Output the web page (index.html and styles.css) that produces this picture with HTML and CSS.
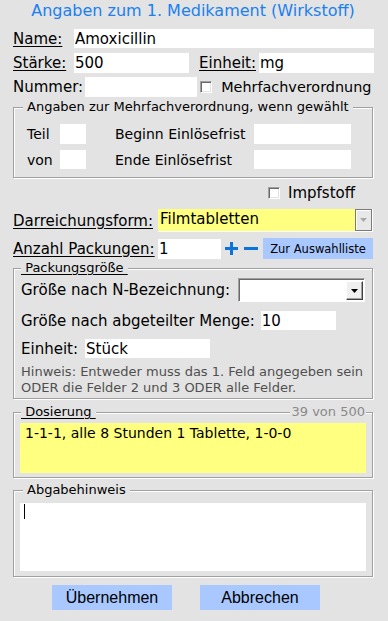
FILE: index.html
```html
<!DOCTYPE html>
<html lang="de">
<head>
  <meta charset="UTF-8" />
  <title>Angaben zum Medikament</title>
  <link rel="stylesheet" href="styles.css">
</head>
<body>
  <div class="dialog">
    <h1 class="title">Angaben zum 1. Medikament (Wirkstoff)</h1>

    <div class="row row-name">
      <span class="lbl ul w61">Name:</span>
      <input class="field w300" type="text" value="Amoxicillin" />
    </div>

    <div class="row row-strength">
      <span class="lbl ul w61">Stärke:</span>
      <input class="field w115" type="text" value="500" />
      <span class="lbl ul lbl-unit">Einheit:</span>
      <input class="field w115" type="text" value="mg" />
    </div>

    <div class="row row-number">
      <span class="lbl">Nummer:</span>
      <input class="field number-field" type="text" value="" />
      <span class="check check-multi"></span>
      <span class="lbl check-label">Mehrfachverordnung</span>
    </div>

    <!-- Mehrfachverordnung -->
    <div class="group group-multi">
      <div class="legend">Angaben zur Mehrfachverordnung, wenn gewählt</div>
      <div class="multi-grid">
        <span>Teil</span>
        <input class="field" type="text" value="" />
        <span></span>
        <span>Beginn Einlösefrist</span>
        <input class="field" type="text" value="" />
        <span>von</span>
        <input class="field" type="text" value="" />
        <span></span>
        <span>Ende Einlösefrist</span>
        <input class="field" type="text" value="" />
      </div>
    </div>

    <div class="row row-vaccine">
      <span class="check"></span>
      <span class="lbl check-label">Impfstoff</span>
    </div>

    <div class="row row-form">
      <span class="lbl ul w145">Darreichungsform:</span>
      <div class="select select-yellow">
        <span class="select-text">Filmtabletten</span>
        <span class="select-btn disabled">
          <svg width="7" height="4" viewBox="0 0 7 4"><path d="M0 0h7L3.5 4z" fill="#a8a8a8"/></svg>
        </span>
      </div>
    </div>

    <div class="row row-count">
      <span class="lbl ul w145">Anzahl Packungen:</span>
      <input class="field count-field" type="text" value="1" />
      <svg class="icon-plus" width="13" height="13" viewBox="0 0 13 13">
        <path d="M6.5 0v13M0 6.5h13" stroke="#0a74dc" stroke-width="3"/>
      </svg>
      <svg class="icon-minus" width="14" height="13" viewBox="0 0 14 13">
        <path d="M0 6.5h14" stroke="#0a74dc" stroke-width="3"/>
      </svg>
      <button class="btn-small">Zur Auswahlliste</button>
    </div>

    <!-- Packungsgröße -->
    <div class="group group-pack">
      <div class="legend legend-ul">&nbsp;Packungsgröße&nbsp;</div>
      <div class="row row-nsize">
        <span class="lbl">Größe nach N-Bezeichnung:</span>
        <div class="select select-white">
          <span class="select-text"></span>
          <span class="select-btn">
            <svg width="7" height="4" viewBox="0 0 7 4"><path d="M0 0h7L3.5 4z" fill="#000"/></svg>
          </span>
        </div>
      </div>
      <div class="row row-amount">
        <span class="lbl">Größe nach abgeteilter Menge:</span>
        <input class="field amount-field" type="text" value="10" />
      </div>
      <div class="row row-piece">
        <span class="lbl">Einheit:</span>
        <input class="field piece-field" type="text" value="Stück" />
      </div>
      <p class="hint">Hinweis: Entweder muss das 1. Feld angegeben sein<br>ODER die Felder 2 und 3 ODER alle Felder.</p>
    </div>

    <!-- Dosierung -->
    <div class="group group-dose">
      <div class="legend legend-ul">&nbsp;Dosierung&nbsp;</div>
      <span class="counter">39 von 500</span>
      <div class="textbox textbox-yellow">1-1-1, alle 8 Stunden 1 Tablette, 1-0-0</div>
    </div>

    <!-- Abgabehinweis -->
    <div class="group group-note">
      <div class="legend">Abgabehinweis</div>
      <div class="textbox textbox-white"><span class="caret"></span></div>
    </div>

    <div class="actions">
      <button class="btn">Übernehmen</button>
      <button class="btn">Abbrechen</button>
    </div>
  </div>
</body>
</html>
```

FILE: styles.css
```css
body {
  margin: 0;
  background-color: #e3e3e3;
  font-family: 'DejaVu Sans', Verdana, sans-serif;
  font-size: 15px;
  color: #000;
}

.dialog {
  width: 360px;
  padding-left: 13px;
}

.title {
  margin: 0;
  height: 22px;
  line-height: 22px;
  font-size: 16px;
  font-weight: normal;
  color: #1a80f0;
  text-align: center;
}

.row {
  display: flex;
  align-items: center;
}

.row > * {
  flex-shrink: 0;
}

.lbl {
  white-space: nowrap;
}

.lbl.ul {
  text-decoration: underline;
  text-underline-offset: 2px;
}

.w61 { width: 61px; }
.w145 { width: 145px; }
.w115 { width: 115px; }
.w300 { width: 300px; }

.field {
  height: 19px;
  border: none;
  outline: none;
  background: #fff;
  padding: 0 1px;
  margin: 0;
  box-sizing: border-box;
  font-family: 'DejaVu Sans', Verdana, sans-serif;
  font-size: 15px;
  color: #000;
}

.row-name {
  margin-top: 7px;
  height: 19px;
}

.row-strength {
  margin-top: 5px;
  height: 20px;
}

.row-strength .field {
  height: 20px;
}

.lbl-unit {
  margin-left: 10px;
  width: 60px;
}

.row-number {
  margin-top: 4px;
  height: 20px;
}

.number-field {
  width: 112px;
  height: 20px;
  margin-left: 2px;
}

.row-number .check-label {
  font-size: 14.4px;
}

/* klassische 3D-Checkbox */
.check {
  width: 12px;
  height: 12px;
  box-sizing: border-box;
  background: #fff;
  border-top: 1px solid #a0a0a0;
  border-left: 1px solid #a0a0a0;
  border-right: 1px solid #fff;
  border-bottom: 1px solid #fff;
  box-shadow: inset 1px 1px 0 #696969, inset -1px -1px 0 #e3e3e3;
}

.check-multi {
  margin-left: 3px;
}

.check-label {
  margin-left: 9px;
}

/* Gruppenrahmen */
.group {
  position: relative;
  box-sizing: border-box;
  width: 360px;
  border: 1px solid #a0a0a0;
  box-shadow: 1px 1px 0 #fff, inset 1px 1px 0 #fff;
}

.legend {
  width: fit-content;
  height: 16px;
  line-height: 16px;
  margin: -9px 0 0 9px;
  padding: 0 4px;
  background: #e3e3e3;
  font-size: 13px;
  white-space: nowrap;
}

.legend-ul {
  padding: 0;
  text-decoration: underline;
  text-underline-offset: 2px;
}

.group-multi {
  margin-top: 10px;
  padding: 0 0 8px 13px;
}

.group-multi .legend {
  margin-left: -4px;
}

.multi-grid {
  margin-top: 9px;
  display: grid;
  grid-template-columns: 33px 26px 29px 139px 97px;
  grid-template-rows: 20px 19px;
  row-gap: 6px;
  align-items: center;
  font-size: 14px;
}

.multi-grid .field {
  height: 100%;
  width: 100%;
}

.row-vaccine {
  margin-top: 5px;
  height: 20px;
  padding-left: 255px;
}

.row-vaccine .check-label {
  margin-left: 8px;
}

.row-form {
  margin-top: 6px;
  height: 23px;
}

.select {
  display: flex;
  box-sizing: border-box;
  height: 100%;
}

.select-yellow {
  width: 215px;
  background: #ffff80;
  border-right: 1px solid #fff;
  border-bottom: 1px solid #fff;
}

.select-text {
  flex: 1;
  padding-left: 2px;
  line-height: 21px;
}

.select-btn {
  width: 17px;
  box-sizing: border-box;
  display: flex;
  align-items: center;
  justify-content: center;
  background: #f0f0f0;
  border: 1px solid #fff;
  border-right-color: #404040;
  border-bottom-color: #404040;
  box-shadow: inset -1px -1px 0 #a0a0a0;
}

.select-btn.disabled {
  background: #e8e8e8;
  border: 1px solid #7a7a7a;
  box-shadow: inset 1px 1px 0 #fff;
}

.row-count {
  margin-top: 6px;
  height: 21px;
}

.count-field {
  width: 63px;
  height: 20px;
}

.icon-plus {
  margin-left: 4px;
}

.icon-minus {
  margin-left: 6px;
}

.btn-small {
  margin-left: 5px;
  width: 110px;
  height: 21px;
  padding: 0;
  border: none;
  background: #a8c8ff;
  font-family: 'DejaVu Sans', Verdana, sans-serif;
  font-size: 11.5px;
  color: #000;
}

.group-pack {
  margin-top: 9px;
  padding: 0 0 2px 7px;
}

.group-pack .legend {
  margin-left: 0;
}

.row-nsize {
  margin-top: 2px;
  height: 24px;
}

.select-white {
  margin-left: 8px;
  width: 127px;
  background: #fff;
  border-top: 1px solid #a0a0a0;
  border-left: 1px solid #a0a0a0;
  border-right: 1px solid #fff;
  border-bottom: 1px solid #fff;
  box-shadow: inset 1px 1px 0 #696969;
  padding: 2px 1px 1px 2px;
}

.row-amount {
  margin-top: 9px;
  height: 19px;
}

.amount-field {
  margin-left: 6px;
  width: 75px;
}

.row-piece {
  margin-top: 9px;
  height: 19px;
}

.piece-field {
  margin-left: 7px;
  width: 125px;
}

.hint {
  margin: 6px 0 0;
  font-size: 13px;
  line-height: 16px;
  color: #505050;
  white-space: nowrap;
}

.group-dose {
  margin-top: 13px;
  padding: 0 6px 4px 6px;
}

.group-dose .legend {
  margin-left: 1px;
}

.counter {
  position: absolute;
  top: -9px;
  right: 6px;
  height: 16px;
  line-height: 16px;
  padding: 0 1px;
  background: #e3e3e3;
  font-size: 13px;
  color: #8a8a8a;
}

.textbox {
  box-sizing: border-box;
  width: 346px;
  font-size: 14px;
  line-height: 17px;
}

.textbox-yellow {
  margin-top: 3px;
  height: 50px;
  padding: 2px 5px;
  background: #ffff80;
}

.group-note {
  margin-top: 12px;
  padding: 0 6px 5px 6px;
}

.group-note .legend {
  margin-left: 3px;
}

.textbox-white {
  margin-top: 5px;
  height: 68px;
  padding: 1px 4px;
  background: #fff;
}

.caret {
  display: block;
  width: 1px;
  height: 15px;
  background: #000;
}

.actions {
  display: flex;
  margin-top: 8px;
  padding-left: 39px;
  gap: 28px;
}

.btn {
  width: 120px;
  height: 25px;
  padding: 0;
  border: none;
  background: #a8c8ff;
  font-family: 'Liberation Sans', Arial, sans-serif;
  font-size: 16px;
  color: #000;
}
```
